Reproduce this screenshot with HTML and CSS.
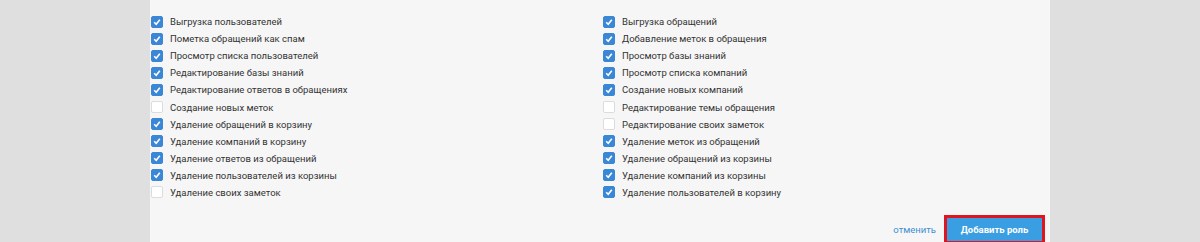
FILE: index.html
```html
<!DOCTYPE html>
<html lang="ru">
<head>
    <meta charset="UTF-8">
    <title>Новая роль</title>
    <link rel="stylesheet" href="styles.css">
</head>
<body>
    <div class="panel">
        <div class="perms">
            <ul class="col">
                <li><span class="box on"></span>Выгрузка пользователей</li>
                <li><span class="box on"></span>Пометка обращений как спам</li>
                <li><span class="box on"></span>Просмотр списка пользователей</li>
                <li><span class="box on"></span>Редактирование базы знаний</li>
                <li><span class="box on"></span>Редактирование ответов в обращениях</li>
                <li><span class="box"></span>Создание новых меток</li>
                <li><span class="box on"></span>Удаление обращений в корзину</li>
                <li><span class="box on"></span>Удаление компаний в корзину</li>
                <li><span class="box on"></span>Удаление ответов из обращений</li>
                <li><span class="box on"></span>Удаление пользователей из корзины</li>
                <li><span class="box"></span>Удаление своих заметок</li>
            </ul>
            <ul class="col">
                <li><span class="box on"></span>Выгрузка обращений</li>
                <li><span class="box on"></span>Добавление меток в обращения</li>
                <li><span class="box on"></span>Просмотр базы знаний</li>
                <li><span class="box on"></span>Просмотр списка компаний</li>
                <li><span class="box on"></span>Создание новых компаний</li>
                <li><span class="box"></span>Редактирование темы обращения</li>
                <li><span class="box"></span>Редактирование своих заметок</li>
                <li><span class="box on"></span>Удаление меток из обращений</li>
                <li><span class="box on"></span>Удаление обращений из корзины</li>
                <li><span class="box on"></span>Удаление компаний из корзины</li>
                <li><span class="box on"></span>Удаление пользователей в корзину</li>
            </ul>
        </div>
        <div class="actions">
            <a href="#" class="cancel">отменить</a>
            <span class="highlight"><button class="btn">Добавить роль</button></span>
        </div>
    </div>
</body>
</html>
```

FILE: styles.css
```css
body {
    margin: 0;
    background: #dfdfdf;
    font-family: Roboto, "Open Sans", sans-serif;
    font-size: 9.5px;
    color: #333;
}
.panel {
    width: 900px;
    height: 242px;
    margin-left: 150px;
    background: #f6f6f6;
    box-sizing: border-box;
    padding-top: 13px;
}
.perms {
    display: grid;
    grid-template-columns: 452px 1fr;
}
.col {
    list-style: none;
    margin: 0;
    padding: 0 0 0 1px;
}
.col li {
    display: flex;
    align-items: center;
    height: 17.1px;
}
.box {
    width: 12px;
    height: 12px;
    box-sizing: border-box;
    border-radius: 2px;
    margin-right: 7px;
    background: #fff;
    border: 1px solid #dcdcdc;
    flex-shrink: 0;
}
.box.on {
    background: #3a87d6 url("data:image/svg+xml,%3Csvg xmlns='http://www.w3.org/2000/svg' viewBox='0 0 12 12'%3E%3Cpath d='M3.2 6.2 L5.2 8.2 L8.8 3.8' fill='none' stroke='white' stroke-width='1.6'/%3E%3C/svg%3E") center/12px 12px no-repeat;
    border-color: #3a87d6;
}
.actions {
    display: flex;
    justify-content: flex-end;
    align-items: center;
    margin-top: 14px;
    padding-right: 5px;
}
.cancel {
    color: #3d8fd3;
    text-decoration: none;
    margin-right: 8px;
}
.highlight {
    display: inline-block;
    border: 3px solid #e0151d;
}
.btn {
    display: block;
    width: 95px;
    height: 23px;
    border: none;
    background: #3a9ee3;
    color: #fff;
    font-family: Roboto, "Open Sans", sans-serif;
    font-size: 9.5px;
    font-weight: bold;
    padding: 0;
}
```
